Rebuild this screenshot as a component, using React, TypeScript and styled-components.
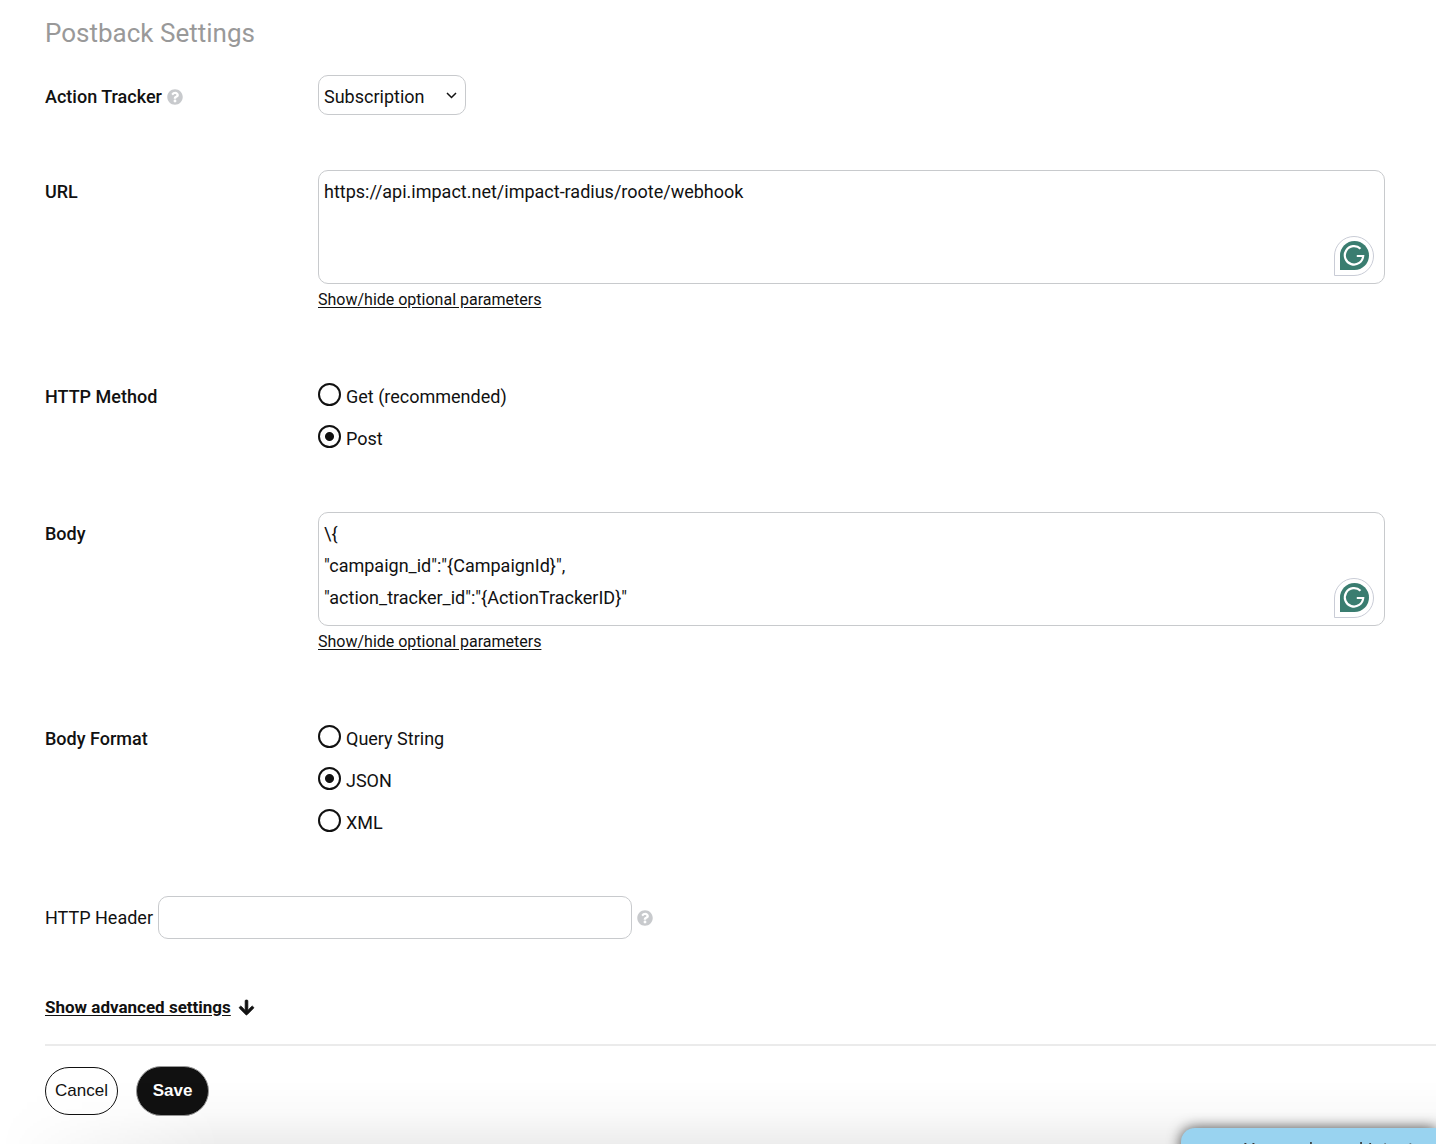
import React, { useState } from "react";
import styled, { createGlobalStyle } from "styled-components";
import { FaArrowDown, FaQuestionCircle } from "react-icons/fa";

const GlobalStyle = createGlobalStyle`
  *, *::before, *::after { box-sizing: border-box; }
  html { overflow: hidden; }
  body {
    margin: 0;
    background: #fff;
    color: #111;
    font: 18px/32px Roboto, "Noto Sans", sans-serif;
  }
  input, select, textarea { font: inherit; color: inherit; }
`;

const Page = styled.main`
  height: 100vh;
  overflow: hidden;
  padding-left: 45px;
`;

const Title = styled.h1`
  margin: 0;
  padding-top: 17px;
  font-size: 26px;
  line-height: 32px;
  font-weight: 400;
  color: #999;
`;

const Form = styled.form`
  padding-top: 26px;
`;

const Row = styled.div<{ $gap: number }>`
  display: grid;
  grid-template-columns: 273px minmax(0, 1fr);
  margin: 0 51px ${(p) => p.$gap}px 0;
`;

const Caption = styled.div`
  display: flex;
  align-items: center;
  align-self: start;
  gap: 5px;
  padding-top: 6px;
  font-weight: 500;
`;

const Help = styled.button`
  display: inline-flex;
  padding: 0;
  border: 0;
  background: none;
  color: #c8cacd;
  font-size: 16px;
`;

const SelectBox = styled.div`
  display: grid;
  width: 148px;
  align-items: center;
  & > * { grid-area: 1 / 1; }
`;

const Select = styled.select`
  appearance: none;
  width: 100%;
  height: 40px;
  padding: 4px 5px 0;
  border: 1px solid #c8cacd;
  border-radius: 10px;
  background: #fff;
`;

const Chevron = styled.svg`
  justify-self: end;
  margin-right: 9px;
  pointer-events: none;
`;

const AreaBox = styled.div`
  position: relative;
  display: flex;
`;

const Area = styled.textarea`
  flex: 1;
  height: 114px;
  padding: 5px;
  border: 1px solid #c8cacd;
  border-radius: 10px;
  background: #fff;
  resize: none;
  overflow: hidden;
`;

const Badge = styled.button`
  position: absolute;
  right: 11px;
  bottom: 8px;
  display: flex;
  padding: 0;
  border: 0;
  background: none;
`;

const OptionalLink = styled.a`
  display: block;
  width: fit-content;
  font-size: 16px;
  color: inherit;
  text-underline-offset: 2px;
`;

const Options = styled.div`
  display: grid;
  gap: 10px;
  padding-top: 6px;
`;

const Option = styled.label`
  display: flex;
  align-items: center;
  gap: 5px;
`;

const Radio = styled.input`
  appearance: none;
  width: 23px;
  height: 23px;
  margin: 0 0 5px;
  border: 2px solid #111;
  border-radius: 50%;
  &:checked { background: radial-gradient(circle, #111 4px, transparent 5px); }
`;

const HeaderRow = styled.div`
  display: flex;
  align-items: center;
  gap: 5px;
`;

const HeaderInput = styled.input`
  width: 474px;
  height: 43px;
  padding: 0 5px;
  border: 1px solid #c8cacd;
  border-radius: 10px;
`;

const Advanced = styled.div`
  display: flex;
  align-items: center;
  gap: 7px;
  padding: 52px 0 21px;
  font-size: 17px;
  font-weight: 700;
  a { color: inherit; text-underline-offset: 2px; }
  svg { stroke: currentColor; stroke-width: 24px; }
`;

const Actions = styled.div`
  display: flex;
  align-items: center;
  gap: 18px;
  padding-top: 20px;
  border-top: 2px solid #ebebeb;
`;

const Button = styled.button<{ $primary?: boolean }>`
  width: 73px;
  height: ${(p) => (p.$primary ? 50 : 48)}px;
  padding: 0;
  border: 1px solid ${(p) => (p.$primary ? "#999" : "#111")};
  border-radius: 25px;
  background: ${(p) => (p.$primary ? "#111" : "#fff")};
  color: ${(p) => (p.$primary ? "#fff" : "#111")};
  font: ${(p) => (p.$primary ? 700 : 400)} 17px "Liberation Sans", Arial, sans-serif;
`;

const BottomFade = styled.div`
  position: fixed;
  inset: auto 0 0 0;
  height: 64px;
  background: linear-gradient(to bottom, rgba(0, 0, 0, 0), rgba(0, 0, 0, 0.02) 50%, rgba(0, 0, 0, 0.07));
  mask-image: linear-gradient(to right, transparent, #000 220px);
  pointer-events: none;
`;

const Toast = styled.aside`
  position: fixed;
  top: calc(100vh - 16px);
  right: 0;
  width: 255px;
  height: 60px;
  padding: 10px 0 0 63px;
  border-top-left-radius: 14px;
  background: #99d3f0;
  box-shadow: 0 0 14px rgba(0, 0, 0, 0.7);
  color: #333;
  font-size: 18px;
  line-height: 24px;
  white-space: nowrap;
`;

function HelpIcon({ label }: { label: string }) {
  return <Help type="button" aria-label={label}><FaQuestionCircle /></Help>;
}

function WritingBadge() {
  return (
    <Badge type="button" aria-label="Check writing">
      <svg width="40" height="40" viewBox="0 0 40 40" fill="none">
        <path d="M.5 39.5V20A19.5 19.5 0 1 1 20 39.5Z" fill="#fff" stroke="#c9ccd6" />
        <path d="M6 34V19.5A14.5 14.5 0 1 1 20.5 34Z" fill="#3a7d70" />
        <path d="M26.500 12.800A9.200 9.200 0 1 0 29.200 20H22.800" stroke="#fff" strokeWidth="2.200" />
      </svg>
    </Badge>
  );
}

function TextField({ id, label, initial }: { id: string; label: string; initial: string }) {
  const [value, setValue] = useState(initial);
  return (
    <Row $gap={59}>
      <Caption as="label" htmlFor={id}>{label}</Caption>
      <div>
        <AreaBox>
          <Area id={id} value={value} spellCheck={false} onChange={(e) => setValue(e.target.value)} />
          <WritingBadge />
        </AreaBox>
        <OptionalLink href="#optional">Show/hide optional parameters</OptionalLink>
      </div>
    </Row>
  );
}

function RadioField({ name, label, options, initial }: { name: string; label: string; options: string[]; initial: string }) {
  const [value, setValue] = useState(initial);
  return (
    <Row $gap={57} role="radiogroup" aria-labelledby={name}>
      <Caption id={name}>{label}</Caption>
      <Options>
        {options.map((o) => (
          <Option key={o}>
            <Radio type="radio" name={name} checked={value === o} onChange={() => setValue(o)} />
            {o}
          </Option>
        ))}
      </Options>
    </Row>
  );
}

const BODY = `\\{
"campaign_id":"{CampaignId}",
"action_tracker_id":"{ActionTrackerID}"`;

export default function App() {
  return (
    <Page>
      <GlobalStyle />
      <Title>Postback Settings</Title>
      <Form onSubmit={(e) => e.preventDefault()}>
        <Row $gap={55}>
          <Caption>
            <label htmlFor="tracker">Action Tracker</label>
            <HelpIcon label="About action trackers" />
          </Caption>
          <SelectBox>
            <Select id="tracker" defaultValue="Subscription">
              <option>Subscription</option>
            </Select>
            <Chevron width="11" height="7" viewBox="0 0 11 7" fill="none" stroke="#111" strokeWidth="1.5">
              <path d="M1 1l4.500 4.500L10 1" />
            </Chevron>
          </SelectBox>
        </Row>
        <TextField id="url" label="URL" initial="https://api.impact.net/impact-radius/roote/webhook" />
        <RadioField name="method" label="HTTP Method" options={["Get (recommended)", "Post"]} initial="Post" />
        <TextField id="body" label="Body" initial={BODY} />
        <RadioField name="format" label="Body Format" options={["Query String", "JSON", "XML"]} initial="JSON" />
        <HeaderRow>
          <label htmlFor="header">HTTP Header</label>
          <HeaderInput id="header" type="text" />
          <HelpIcon label="About the HTTP header" />
        </HeaderRow>
        <Advanced>
          <a href="#advanced">Show advanced settings</a>
          <FaArrowDown aria-hidden="true" />
        </Advanced>
        <Actions>
          <Button type="button">Cancel</Button>
          <Button type="submit" $primary>Save</Button>
        </Actions>
      </Form>
      <BottomFade />
      <Toast>You are logged Intent</Toast>
    </Page>
  );
}
